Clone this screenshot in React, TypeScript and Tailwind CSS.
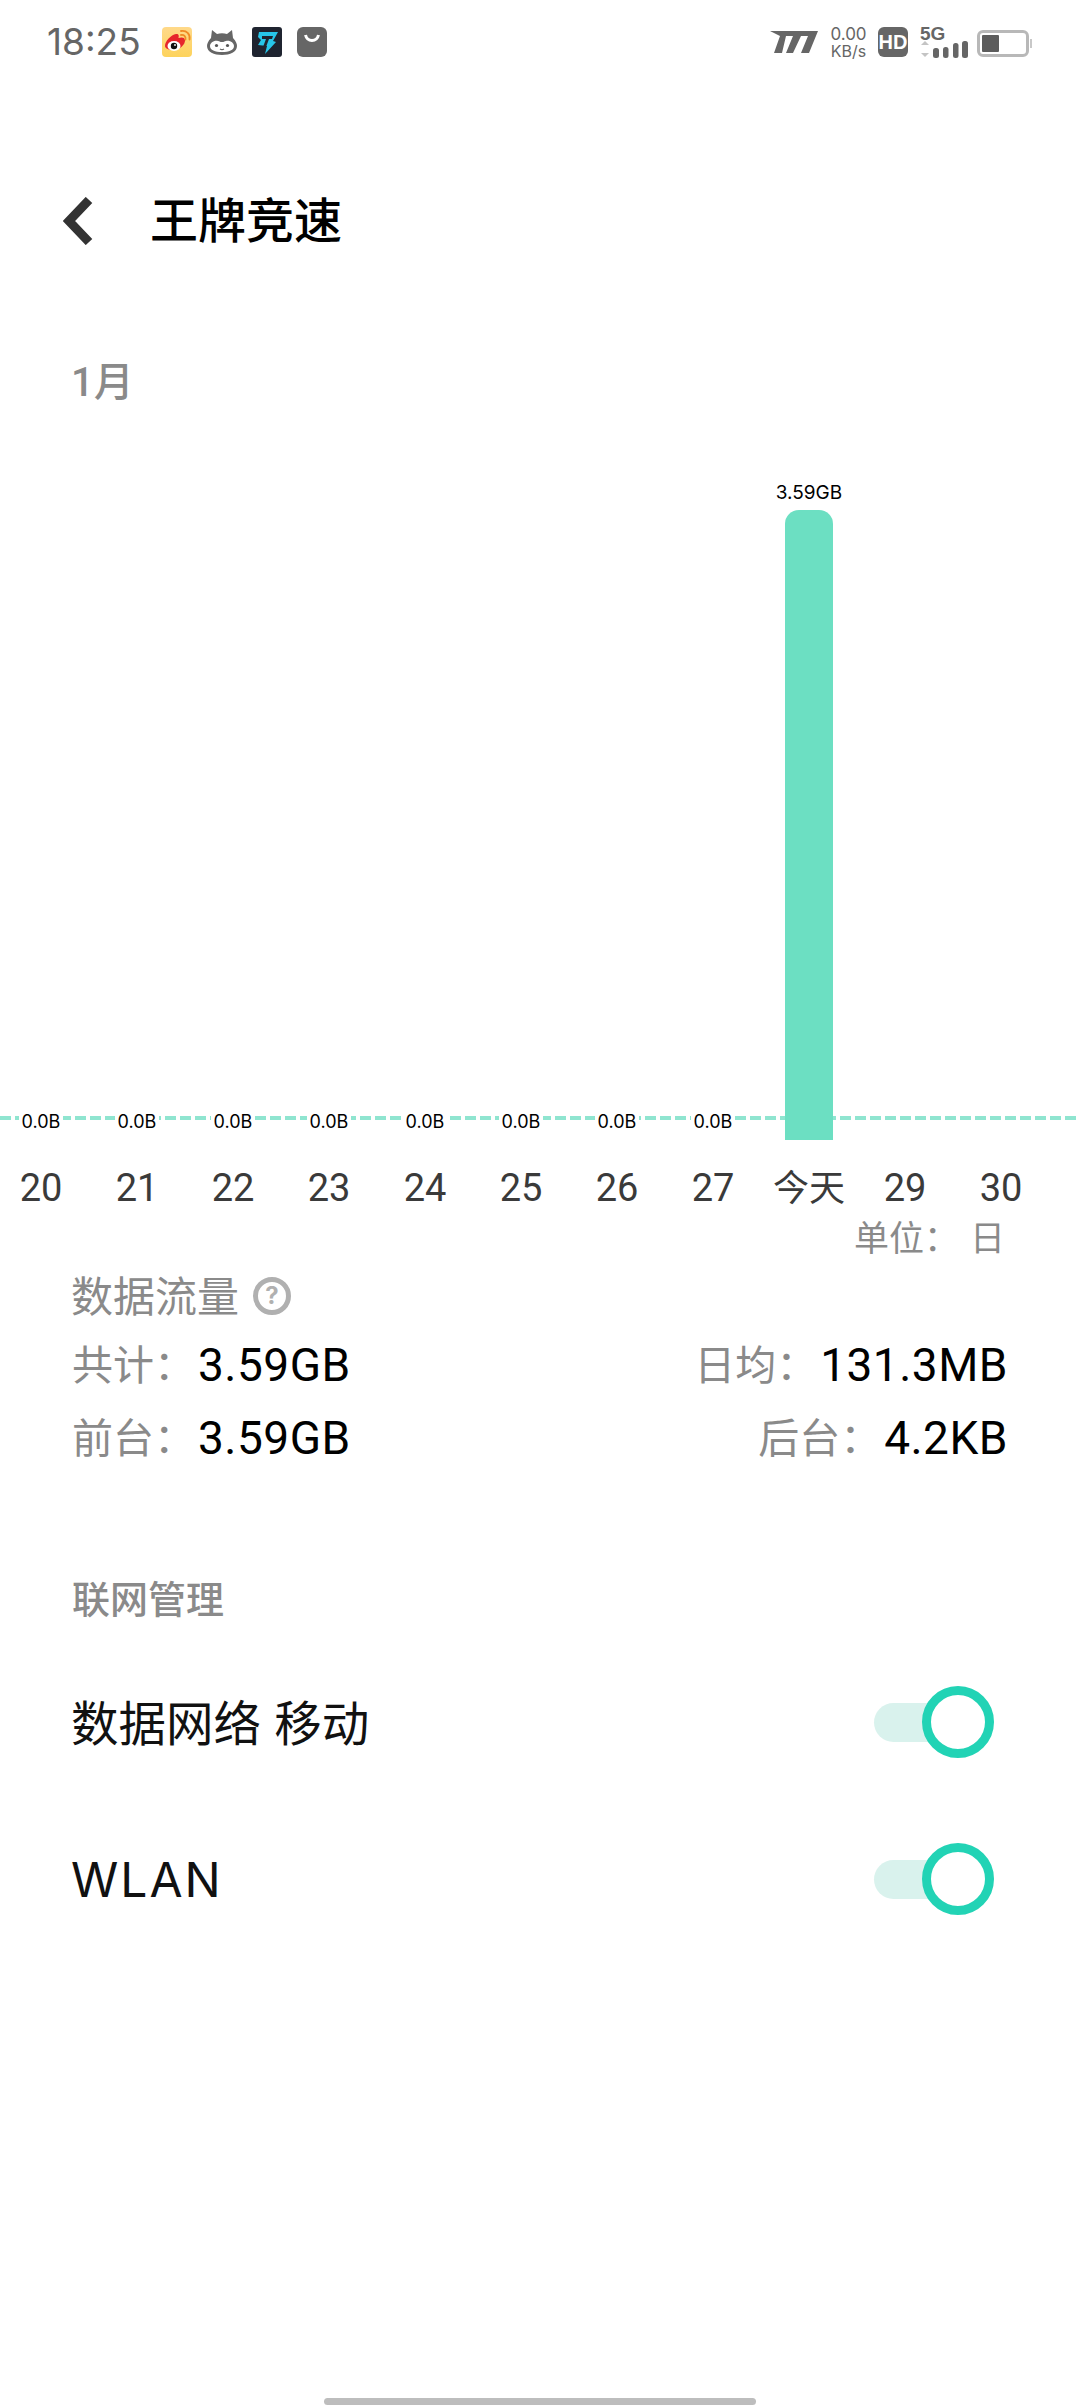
const FONT = "font-['Inter','Noto_Sans_CJK_SC',sans-serif]";

const days = [
  { day: "20", value: "0.0B" },
  { day: "21", value: "0.0B" },
  { day: "22", value: "0.0B" },
  { day: "23", value: "0.0B" },
  { day: "24", value: "0.0B" },
  { day: "25", value: "0.0B" },
  { day: "26", value: "0.0B" },
  { day: "27", value: "0.0B" },
  { day: "今天", value: "3.59GB", bar: true },
  { day: "29" },
  { day: "30" },
];

function Weibo() {
  return (
    <svg width="30" height="30" viewBox="0 0 30 30">
      <defs>
        <linearGradient id="wb" x1="0" y1="0" x2="0" y2="1">
          <stop offset="0" stopColor="#ffd98a" />
          <stop offset="1" stopColor="#fdd35c" />
        </linearGradient>
      </defs>
      <rect width="30" height="30" rx="4" fill="url(#wb)" />
      <path d="M3 19c0-5 6-11 11-12 3-.5 3 2 2.500 4 3-1 6-1 6.500 2 .5 5-6 10-12 10-5 0-8-2-8-4z" fill="#e6262c" />
      <ellipse cx="12" cy="19" rx="6.500" ry="5" fill="#fff" />
      <circle cx="12" cy="19" r="3.200" fill="#111" />
      <circle cx="13" cy="18" r="0.900" fill="#fff" />
      <path d="M19 8c3-.5 5 1.500 4.500 4.500M19 4c5.500-1 9.500 3 8.500 8.500" fill="none" stroke="#f08a24" strokeWidth="1.800" strokeLinecap="round" />
    </svg>
  );
}

function Cat() {
  return (
    <svg width="30" height="30" viewBox="0 0 30 30">
      <path d="M5 3l5 4c3-1 7-1 10 0l5-4 1 8c3 3 4 6 4 8 0 6-7 9-15 9S0 25 0 19c0-2 1-5 4-8z" fill="#666" />
      <path d="M3 19c0-3 4-6 8-5 2 .5 2 1 4 1s2-.5 4-1c4-1 8 2 8 5 0 4-5 6-12 6S3 23 3 19z" fill="#fff" />
      <circle cx="9.500" cy="18.500" r="1.600" fill="#555" />
      <circle cx="20.500" cy="18.500" r="1.600" fill="#555" />
      <path d="M13 22c1.300 .8 2.700 .8 4 0" stroke="#666" strokeWidth="1.200" fill="none" />
    </svg>
  );
}

function Bolt() {
  return (
    <svg width="30" height="30" viewBox="0 0 30 30">
      <rect width="30" height="30" rx="3" fill="#1f2430" />
      <path d="M7 5h19l-5 9 3 1-11 12 2-8-9-1 3-5-3-3z" fill="#27c6ea" />
      <path d="M10 9h11l-1 3h-3l-3 8h-3l3-8h-4z" fill="#1f2430" />
    </svg>
  );
}

function Bag() {
  return (
    <svg width="30" height="30" viewBox="0 0 30 30">
      <rect width="30" height="30" rx="6" fill="#666" />
      <path d="M8.500 8c1 4 3.500 5.500 6.500 5.500S20.500 12 21.500 8" fill="none" stroke="#fff" strokeWidth="3" />
    </svg>
  );
}

function Carrier() {
  return (
    <svg width="48" height="22" viewBox="0 0 48 22">
      <path d="M0 0H48L39 22H31L38 5H31L23 22H16L23 5H16L12 22H4L10 5Z" fill="#666" />
    </svg>
  );
}

function Signal() {
  return (
    <svg width="48" height="18" viewBox="0 0 48 18">
      <path d="M5 1l4 4H1zM5 17l4-4H1z" fill="#c4c4c4" />
      <rect x="13" y="8" width="6" height="10" rx="2.500" fill="#666" />
      <rect x="23" y="7" width="5.500" height="11" rx="2.500" fill="#666" />
      <rect x="33" y="3" width="5.500" height="15" rx="2.500" fill="#666" />
      <rect x="42" y="1" width="6" height="17" rx="2.500" fill="#666" />
    </svg>
  );
}

function Battery() {
  return (
    <div className="flex items-center">
      <div className="w-[52px] h-[27px] rounded-[6px] border-[3px] border-[#b8b8b8] pl-[2px] py-[2px]">
        <div className="w-[17px] h-full rounded-[1px] bg-[#5c5c5c]" />
      </div>
      <div className="w-[2px] h-[9px] ml-[1px] bg-[#c8c8c8]" />
    </div>
  );
}

function StatusBar() {
  return (
    <div className="h-[84px] flex justify-between pt-[27px] pl-[47px] pr-[48px]">
      <div className="flex items-start">
        <span className="font-['Inter',sans-serif] text-[37px] leading-[30px] text-[#666] w-[93px] whitespace-nowrap">18:25</span>
        <div className="flex gap-[15px] ml-[22px]">
          <Weibo />
          <Cat />
          <Bolt />
          <Bag />
        </div>
      </div>
      <div className="flex items-start">
        <div className="mt-[4px]">
          <Carrier />
        </div>
        <div className="ml-[12px] w-[37px] flex flex-col items-center text-[#666] font-['Inter',sans-serif]">
          <span className="text-[17px] leading-[15px]">0.00</span>
          <span className="text-[16px] leading-[15px] mt-[2px]">KB/s</span>
        </div>
        <div className="ml-[11px] w-[30px] h-[30px] rounded-[6px] bg-[#666] flex items-center justify-center text-white text-[20px] font-bold font-['Liberation_Sans',sans-serif]">
          HD
        </div>
        <div className="ml-[12px] w-[48px] flex flex-col">
          <span className="text-[#666] text-[19px] leading-[14px] font-bold font-['Liberation_Sans',sans-serif]">5G</span>
          <div className="-mt-px">
            <Signal />
          </div>
        </div>
        <div className="ml-[9px] mt-[3px]">
          <Battery />
        </div>
      </div>
    </div>
  );
}

function Toggle() {
  return (
    <div className="relative w-[120px] h-[72px] flex items-center">
      <div className="w-[80px] h-[39px] rounded-full bg-[#d9f2ed]" />
      <div className="absolute right-0 top-0 w-[72px] h-[72px] rounded-full border-[9px] border-[#22d3b5] bg-white" />
    </div>
  );
}

function Stat({ label, value }: { label: string; value: string }) {
  return (
    <div className="flex items-center leading-[56px]">
      <span className="text-[41px] text-[#8a8a8a] w-[126px] whitespace-nowrap">{label}</span>
      <span className="text-[46px] tracking-[0.5px] text-black font-['Roboto',sans-serif]">{value}</span>
    </div>
  );
}

export default function App() {
  return (
    <div className={`w-[1080px] h-[2408px] bg-white flex flex-col overflow-hidden ${FONT}`}>
      <StatusBar />

      <div className="mt-[89px] h-[96px] flex items-center pl-[63px]">
        <svg width="30" height="48" viewBox="0 0 30 48">
          <path d="M26 3L6 24L26 45" fill="none" stroke="#333" strokeWidth="9" />
        </svg>
        <h1 className="ml-[57px] text-[48px] leading-[60px] text-black font-medium">王牌竞速</h1>
      </div>

      <div className="mt-[92px] pl-[71px] text-[40px] leading-[44px] font-medium text-[#8a8a8a] font-['Roboto','Noto_Sans_CJK_SC',sans-serif]">1月</div>

      <div className="relative mt-[65px] h-[670px]">
        <div className="absolute left-0 right-0 top-[646px] h-[4px] bg-[repeating-linear-gradient(90deg,#8fe5d0_0,#8fe5d0_11px,transparent_11px,transparent_15px)]" />
        <div className="relative -ml-[7px] flex h-full">
          {days.map((d) => (
            <div key={d.day} className="w-[96px] shrink-0 flex flex-col items-center justify-end">
              {d.bar ? (
                <>
                  <span className="text-[19px] leading-[20px] text-black mb-[7px]">{d.value}</span>
                  <div className="w-[48px] h-[630px] rounded-t-[14px] bg-[#6cdfc2]" />
                </>
              ) : d.value ? (
                <span className="px-[3px] mb-[10px] text-[18px] leading-[16px] text-black bg-white">{d.value}</span>
              ) : null}
            </div>
          ))}
        </div>
      </div>

      <div className="mt-[26px] -ml-[7px] flex">
        {days.map((d) => (
          <div
            key={d.day}
            className={
              d.bar
                ? "w-[96px] shrink-0 text-center text-[36px] leading-[44px] text-[#3a3a3a]"
                : "w-[96px] shrink-0 text-center text-[38px] leading-[44px] text-[#3a3a3a] font-['Roboto',sans-serif]"
            }
          >
            {d.day}
          </div>
        ))}
      </div>

      <div className="mt-[8px] pr-[75px] flex justify-end text-[35px] leading-[40px] text-[#8a8a8a]">
        <span>单位：</span>
        <span className="ml-[11px]">日</span>
      </div>

      <div className="mt-[17px] pl-[71px] flex items-center">
        <span className="text-[42px] leading-[44px] text-[#8a8a8a]">数据流量</span>
        <div className="ml-[14px] -mt-[2px] w-[38px] h-[38px] rounded-full border-[5px] border-[#b0b0b0] flex items-center justify-center text-[24px] font-bold text-[#b0b0b0]">
          ?
        </div>
      </div>

      <div className="mt-[18px] px-[72px] flex flex-col gap-[17px]">
        <div className="flex justify-between">
          <Stat label="共计：" value="3.59GB" />
          <Stat label="日均：" value="131.3MB" />
        </div>
        <div className="flex justify-between">
          <Stat label="前台：" value="3.59GB" />
          <Stat label="后台：" value="4.2KB" />
        </div>
      </div>

      <div className="mt-[111px] pl-[72px] text-[38px] leading-[44px] font-medium text-[#8a8a8a]">联网管理</div>

      <div className="mt-[51px] h-[100px] pl-[71px] pr-[86px] flex items-center justify-between">
        <span className="text-[47.5px] text-[#111] mt-[3px]">数据网络 移动</span>
        <Toggle />
      </div>
      <div className="mt-[57px] h-[100px] pl-[71px] pr-[86px] flex items-center justify-between">
        <span className="text-[48px] tracking-[2px] text-[#111] mt-[2px]">WLAN</span>
        <Toggle />
      </div>

      <div className="mt-auto mb-[3px] mx-auto w-[432px] h-[7px] rounded-full bg-[#bdbdbd]" />
    </div>
  );
}
